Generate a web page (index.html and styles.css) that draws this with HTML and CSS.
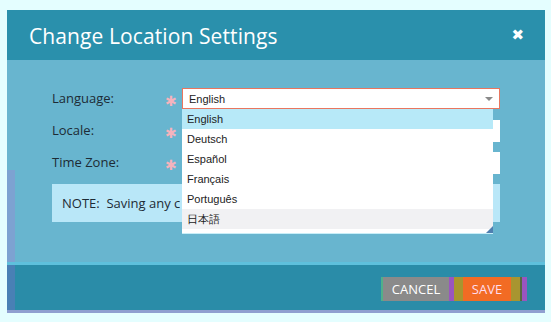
FILE: index.html
```html
<!DOCTYPE html>
<html>
<head>
    <meta charset="UTF-8">
    <title>Change Location Settings</title>
    <link rel="stylesheet" href="styles.css">
</head>
<body>
    <div class="dialog">
        <div class="dialog-header">
            <h2>Change Location Settings</h2>
            <span class="close">&#10006;</span>
        </div>

        <div class="dialog-body">
            <div class="strip"></div>
            <div class="row">
                <label>Language:</label>
                <span class="req">&#10033;</span>
                <div class="select-wrap">
                    <div class="select">
                        <span>English</span>
                        <span class="arrow"></span>
                    </div>
                    <ul class="options">
                        <li class="active">English</li>
                        <li>Deutsch</li>
                        <li>Español</li>
                        <li>Français</li>
                        <li>Português</li>
                        <li class="hover">日本語</li>
                    </ul>
                </div>
            </div>
            <div class="row">
                <label>Locale:</label>
                <span class="req">&#10033;</span>
                <div class="field"></div>
            </div>
            <div class="row">
                <label>Time Zone:</label>
                <span class="req">&#10033;</span>
                <div class="field"></div>
            </div>
            <div class="note"><span class="note-text">NOTE:&nbsp; Saving any changes will reload the page.</span></div>
        </div>

        <div class="dialog-footer">
            <div class="strip"></div>
            <div class="buttons">
                <button class="btn-cancel">CANCEL</button>
                <span class="gap"></span>
                <button class="btn-save"><span>SAVE</span></button>
                <span class="gap"></span>
            </div>
        </div>
    </div>
</body>
</html>
```

FILE: styles.css
```css
body {
    margin: 0;
    padding: 10px 6px 9px 7px;
    background-color: #e4feff;
    font-family: 'Open Sans', sans-serif;
}
.dialog {
    width: 538px;
    border-bottom: 3px solid #8f9fd0;
}
.dialog-header {
    height: 50px;
    background-color: #2a90ac;
    display: flex;
    align-items: center;
    justify-content: space-between;
    padding: 0 21px 0 22px;
}
.dialog-header h2 {
    margin: 0;
    color: #fff;
    font-size: 21px;
    font-weight: normal;
    letter-spacing: 0.1px;
    position: relative;
    top: 1px;
}
.close {
    color: #fff;
    font-size: 15px;
    font-weight: bold;
    font-family: 'DejaVu Sans', sans-serif;
}
.dialog-body {
    position: relative;
    height: 205px;
    background-color: #68b5cf;
    border-bottom: 3px solid #5ec0dc;
    padding: 28px 0 0 45px;
    box-sizing: border-box;
}
.strip {
    position: absolute;
    left: 0;
    top: 0;
    bottom: 0;
    width: 8px;
    background-color: rgba(150, 140, 210, 0.45);
}
.dialog-body .strip {
    top: 110px;
}
.row {
    display: flex;
    align-items: center;
    height: 21px;
    margin-bottom: 11px;
}
label {
    width: 113px;
    color: #1d2b35;
    font-size: 13px;
    position: relative;
    top: -1px;
}
.req {
    width: 17px;
    color: #f5b3bd;
    font-size: 14px;
    font-family: 'DejaVu Sans', sans-serif;
    position: relative;
    top: 2px;
}
.select-wrap {
    position: relative;
}
.select {
    width: 318px;
    height: 21px;
    box-sizing: border-box;
    background-color: #fff;
    border: 1px solid #e9765f;
    display: flex;
    align-items: center;
    justify-content: space-between;
    padding: 0 6px 0 6px;
    font-family: 'Liberation Sans', Arial, sans-serif;
    font-size: 11px;
    color: #222;
}
.arrow {
    width: 0;
    height: 0;
    border-left: 4px solid transparent;
    border-right: 4px solid transparent;
    border-top: 4px solid #8a8a8a;
}
.options {
    position: absolute;
    top: 21px;
    left: 0;
    width: 311px;
    margin: 0;
    padding: 0 0 4px 0;
    list-style: none;
    background-color: #fff;
    font-family: 'Liberation Sans', Arial, sans-serif;
    font-size: 11px;
    color: #222;
    z-index: 2;
    box-shadow: 0 1px 0 #c8eef8;
}
.options::after {
    content: '';
    position: absolute;
    right: 0;
    bottom: 0;
    border-left: 7px solid transparent;
    border-bottom: 7px solid #4f7fb0;
}
.options li {
    height: 20px;
    line-height: 20px;
    padding-left: 5px;
}
.options li.active {
    background-color: #b7e9f8;
}
.options li.hover {
    background-color: #f1f1f3;
}
.field {
    width: 318px;
    height: 22px;
    background-color: #fff;
}
.note {
    width: 448px;
    height: 38px;
    box-sizing: border-box;
    margin-top: 10px;
    padding: 0 10px;
    line-height: 38px;
    background-color: #b9e7f8;
    color: #1d2b35;
    font-size: 13px;
}
.note-text {
    display: block;
    width: 118px;
    white-space: nowrap;
    overflow: hidden;
}
.dialog-footer {
    position: relative;
    height: 45px;
    background-color: #2a8ca8;
    display: flex;
    justify-content: flex-end;
    align-items: center;
    padding-right: 18px;
}
.dialog-footer .strip {
    background-color: rgba(120, 110, 200, 0.4);
}
.buttons {
    display: flex;
    align-items: center;
    position: relative;
    top: 1px;
}
.buttons button {
    height: 24px;
    border: none;
    font-family: 'Open Sans', sans-serif;
    font-size: 13px;
    color: #fff;
    padding: 0;
}
.btn-cancel {
    width: 68px;
    background-color: #8a8a8a;
    border-left: 2px solid #4fb08a !important;
}
.btn-save {
    width: 68px;
    background-color: #a89530;
    padding: 0 9px 0 9px !important;
    border-right: 2px solid #5a6a40 !important;
}
.btn-save span {
    display: block;
    height: 24px;
    line-height: 24px;
    background-color: #f26b24;
    color: #fde;
}
.gap {
    width: 5px;
    height: 24px;
    background-color: #9a55c0;
}
```
